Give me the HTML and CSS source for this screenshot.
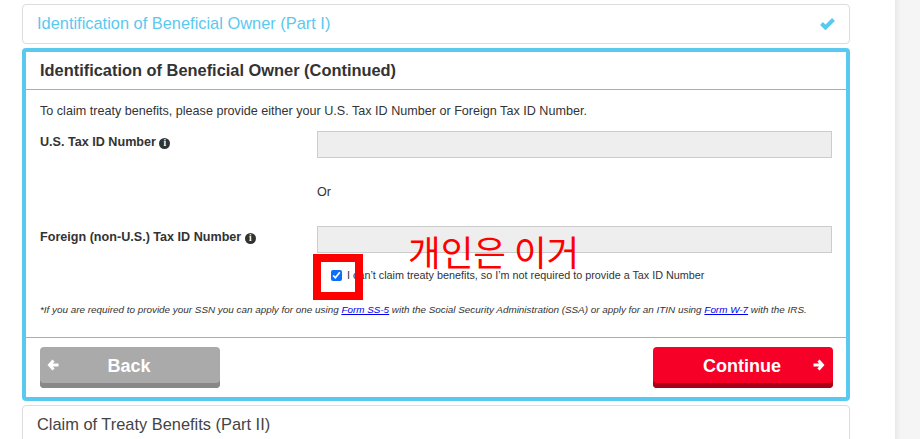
FILE: index.html
```html
<!DOCTYPE html>
<html lang="en">
<head>
  <meta charset="UTF-8">
  <title>Tax Form</title>
  <link rel="stylesheet" href="styles.css">
</head>
<body>
<div class="page">
  <main class="content">
    <div class="panel done">
      <span>Identification of Beneficial Owner (Part I)</span>
      <svg class="check" width="15" height="13" viewBox="0 0 15 13"><path d="M1.500 6.500 L5.500 10.500 L13.500 2.500" fill="none" stroke="#5bc8f0" stroke-width="4"/></svg>
    </div>

    <form class="active">
      <h2 class="active-title">Identification of Beneficial Owner (Continued)</h2>
      <div class="active-body">
        <p class="intro">To claim treaty benefits, please provide either your U.S. Tax ID Number or Foreign Tax ID Number.</p>
        <div class="row">
          <label class="row-label">U.S. Tax ID Number <i class="info">i</i></label>
          <div class="field"></div>
        </div>
        <div class="or">Or</div>
        <div class="row">
          <label class="row-label">Foreign (non-U.S.) Tax ID Number <i class="info">i</i></label>
          <div class="field"></div>
        </div>
        <label class="cant">
          <input type="checkbox" checked>
          <span>I can’t claim treaty benefits, so I’m not required to provide a Tax ID Number</span>
        </label>
        <p class="note">*If you are required to provide your SSN you can apply for one using <a href="#">Form SS-5</a> with the Social Security Administration (SSA) or apply for an ITIN using <a href="#">Form W-7</a> with the IRS.</p>
      </div>
      <div class="active-foot">
        <button type="button" class="btn back">
          <svg class="arrow left" width="12" height="12" viewBox="0 0 12 12"><path d="M6.500 1.500 L2.500 6 L6.500 10.500 M3 6 H11.500" fill="none" stroke="#fff" stroke-width="3"/></svg>
          Back
        </button>
        <button type="button" class="btn next">
          Continue
          <svg class="arrow right" width="12" height="12" viewBox="0 0 12 12"><path d="M5.500 1.500 L9.500 6 L5.500 10.500 M9 6 H0.500" fill="none" stroke="#fff" stroke-width="3"/></svg>
        </button>
      </div>
    </form>

    <div class="panel">
      <span>Claim of Treaty Benefits (Part II)</span>
    </div>
  </main>
  <div class="scroll-track"></div>
</div>

<div class="mark-box"></div>
<div class="mark-text">개인은 이거</div>
</body>
</html>
```

FILE: styles.css
```css
html, body {
  margin: 0;
  padding: 0;
  height: 100%;
  overflow: hidden;
  background: #fff;
  font-family: "Liberation Sans", Arial, sans-serif;
  color: #333;
}

.page {
  display: flex;
  height: 439px;
  overflow: hidden;
}

.content {
  width: 828px;
  padding: 4px 45px 0 22px;
  display: flex;
  flex-direction: column;
  gap: 4px;
}

.scroll-track {
  width: 25px;
  background: linear-gradient(to right, #e9e9e9, #f5f5f5 6px);
}

.panel {
  flex: none;
  box-sizing: border-box;
  height: 40px;
  padding: 0 14px 2px;
  display: flex;
  align-items: center;
  justify-content: space-between;
  border: 1px solid #ddd;
  border-radius: 4px;
  font-size: 16.400px;
  color: #444;
}

.panel.done {
  color: #5bc8f0;
}

.active {
  flex: none;
  box-sizing: border-box;
  height: 353px;
  border: 4px solid #5bc8f0;
  border-radius: 4px;
  display: flex;
  flex-direction: column;
}

.active-title {
  margin: 0;
  height: 37px;
  line-height: 37px;
  padding-left: 14px;
  font-size: 16.400px;
  font-weight: bold;
  border-bottom: 1px solid #5bc8f0;
}

.active-body {
  flex: 1;
  padding: 0 14px;
  font-size: 12.600px;
}

.intro {
  margin: 13px 0 0;
  line-height: 16px;
}

.row {
  display: flex;
  margin-top: 12px;
}

.row-label {
  width: 277px;
  font-weight: bold;
  line-height: 23px;
}

.info {
  display: inline-block;
  width: 11px;
  height: 11px;
  border-radius: 50%;
  background: #333;
  color: #fff;
  font: bold 9.500px/11px "Liberation Serif", serif;
  text-align: center;
  vertical-align: 0;
}

.field {
  width: 513px;
  height: 25px;
  background: #eee;
  border: 1px solid #ccc;
}

.or {
  margin: 26px 0 0 277px;
  line-height: 16px;
}

.or + .row {
  margin-top: 26px;
}

.cant {
  display: flex;
  align-items: center;
  margin: 14px 0 0 288px;
  font-size: 10.800px;
  line-height: 16px;
}

.cant input {
  width: 11px;
  height: 11px;
  margin: 0 5px 0 3px;
  accent-color: #0d6efd;
}

.note {
  margin: 20px 0 0;
  font-size: 9.880px;
  font-style: italic;
  line-height: 14px;
}

.note a {
  color: #00e;
}

.active-foot {
  height: 60px;
  box-sizing: border-box;
  border-top: 1px solid #5bc8f0;
  padding: 9px 14px 0;
  display: flex;
  justify-content: space-between;
}

.btn {
  position: relative;
  width: 180px;
  height: 41px;
  padding: 0 2px 2px 0;
  border: none;
  border-radius: 4px;
  color: #fff;
  font: bold 18px "Liberation Sans", Arial, sans-serif;
}

.btn.back {
  background: #aaa;
  box-shadow: inset 0 -5px 0 #888;
}

.btn.next {
  background: #f70027;
  box-shadow: inset 0 -5px 0 #a80018;
  margin-right: -1px;
}

.arrow {
  position: absolute;
  top: 12px;
}

.arrow.left {
  left: 7px;
}

.arrow.right {
  right: 8px;
}

.mark-box {
  position: absolute;
  left: 313px;
  top: 254px;
  width: 34px;
  height: 30px;
  border: 8px solid #f00;
}

.mark-text {
  position: absolute;
  left: 408px;
  top: 233px;
  color: #f00;
  font: 35.500px/36px "Noto Sans CJK KR", sans-serif;
  white-space: nowrap;
}
```
